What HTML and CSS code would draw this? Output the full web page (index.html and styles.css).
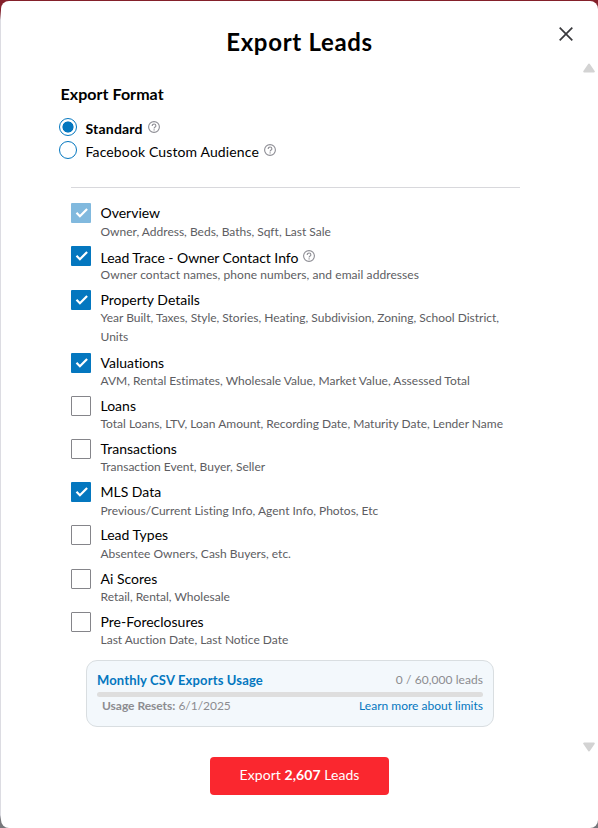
FILE: index.html
```html
<!DOCTYPE html>
<html lang="en">
<head>
<meta charset="utf-8">
<title>Export Leads</title>
<link rel="stylesheet" href="styles.css">
</head>
<body>
<svg class="defs" aria-hidden="true">
  <symbol id="help" viewBox="0 0 12 12"><circle cx="6" cy="6" r="5.400"/><path d="M4.200 4.900c0-2.500 3.700-2.400 3.700 0C7.900 6.100 6.100 6 6.100 7.500M6.100 8.300v1.100"/></symbol>
  <symbol id="check" viewBox="0 0 20 20"><path d="M5.500 9.800l3.400 3.400 7.200-7.200"/></symbol>
</svg>
<main class="modal">
  <header class="modal-head">
    <h1>Export Leads</h1>
    <button class="close" aria-label="Close"><svg viewBox="0 0 14 14"><path d="M.7.7l12.600 12.600M13.300.7L.7 13.300"/></svg></button>
  </header>
  <svg class="scroll-arrow up" viewBox="0 0 12 10"><path d="M6 1.500L10.800 8.500H1.200z"/></svg>
  <svg class="scroll-arrow down" viewBox="0 0 12 10"><path d="M6 8.500L1.200 1.500h9.600z"/></svg>

  <section class="format">
    <h2>Export Format</h2>
    <label class="radio selected"><span class="dot"></span><b>Standard</b><svg class="help"><use href="#help"/></svg></label>
    <label class="radio"><span class="dot"></span><span class="radio-text">Facebook Custom Audience</span><svg class="help"><use href="#help"/></svg></label>
  </section>

  <section class="fields">
    <div class="field"><span class="box on disabled"><svg><use href="#check"/></svg></span><div><h3>Overview</h3><p>Owner, Address, Beds, Baths, Sqft, Last Sale</p></div></div>
    <div class="field with-help"><span class="box on"><svg><use href="#check"/></svg></span><div><h3>Lead Trace - Owner Contact Info<svg class="help"><use href="#help"/></svg></h3><p>Owner contact names, phone numbers, and email addresses</p></div></div>
    <div class="field two-line"><span class="box on"><svg><use href="#check"/></svg></span><div><h3>Property Details</h3><p>Year Built, Taxes, Style, Stories, Heating, Subdivision, Zoning, School District,<br>Units</p></div></div>
    <div class="field"><span class="box on"><svg><use href="#check"/></svg></span><div><h3>Valuations</h3><p>AVM, Rental Estimates, Wholesale Value, Market Value, Assessed Total</p></div></div>
    <div class="field"><span class="box"></span><div><h3>Loans</h3><p>Total Loans, LTV, Loan Amount, Recording Date, Maturity Date, Lender Name</p></div></div>
    <div class="field"><span class="box"></span><div><h3>Transactions</h3><p>Transaction Event, Buyer, Seller</p></div></div>
    <div class="field"><span class="box on"><svg><use href="#check"/></svg></span><div><h3>MLS Data</h3><p>Previous/Current Listing Info, Agent Info, Photos, Etc</p></div></div>
    <div class="field"><span class="box"></span><div><h3>Lead Types</h3><p>Absentee Owners, Cash Buyers, etc.</p></div></div>
    <div class="field"><span class="box"></span><div><h3>Ai Scores</h3><p>Retail, Rental, Wholesale</p></div></div>
    <div class="field"><span class="box"></span><div><h3>Pre-Foreclosures</h3><p>Last Auction Date, Last Notice Date</p></div></div>
  </section>

  <section class="usage">
    <div class="usage-row"><strong class="usage-title">Monthly CSV Exports Usage</strong><span class="count">0 / 60,000 leads</span></div>
    <div class="track"></div>
    <div class="usage-row second"><span class="resets"><b>Usage Resets:</b> 6/1/2025</span><a class="limits">Learn more about limits</a></div>
  </section>

  <button class="export">Export <b>2,607</b> Leads</button>
</main>
</body>
</html>
```
FILE: styles.css
```css
* { box-sizing: border-box; }
body {
  margin: 0;
  height: 828px;
  overflow: hidden;
  background: linear-gradient(#84202a 0 10px, #dcdce2 20px 815px, #77777b 820px);
  font-family: Lato, "Liberation Sans", sans-serif;
  font-variant-ligatures: none;
  color: #000;
}
h1, h2, h3, p { margin: 0; }
button { font-family: inherit; border: 0; padding: 0; }
.defs { position: absolute; width: 0; height: 0; }
.modal {
  position: relative;
  display: flex;
  flex-direction: column;
  height: 827px;
  margin: 1px 0 0 1px;
  background: #fff;
  border-radius: 8px;
}
.modal-head { height: 81px; padding-top: 26px; text-align: center; }
h1 { font-size: 24px; line-height: 30px; font-weight: 700; letter-spacing: .68px; }
.close { position: absolute; left: 558px; top: 26px; width: 14px; height: 14px; background: none; }
.close svg { display: block; width: 14px; height: 14px; fill: none; stroke: #39393d; stroke-width: 1.7; }
.scroll-arrow { position: absolute; width: 12px; height: 10px; fill: #d3d3d3; stroke: #d3d3d3; stroke-width: 2; stroke-linejoin: round; }
.up { left: 582px; top: 62px; }
.down { left: 582px; top: 741px; }

.format { padding-left: 59.500px; height: 105px; }
h2 { font-size: 16px; line-height: 24px; font-weight: 700; height: 34px; letter-spacing: .05px; }
.radio { display: flex; height: 23px; font-size: 14px; line-height: 24px; letter-spacing: .13px; }
.dot { width: 18px; height: 18px; margin: 2px 8.500px 0 -1.500px; border: 1.5px solid #0477bf; border-radius: 50%; }
.selected .dot { background: radial-gradient(circle, #0477bf 5.2px, #fff 5.900px); }
.radio b, .radio-text { padding-top: 1px; }
.selected b { letter-spacing: .2px; }
.help { width: 12px; height: 12px; margin: 5px 0 0 5px; fill: none; stroke: #8e8e95; stroke-width: 1.1; flex: none; }

.fields { width: 449px; margin-left: 70px; padding-top: 15.200px; border-top: 1px solid #d8d8dc; height: 473px; }
.field { display: grid; grid-template-columns: 20px 1fr; column-gap: 9.500px; padding-bottom: 4.200px; }
.two-line { padding-bottom: 5px; }
.box { width: 20px; height: 20px; border: 1px solid #85858a; border-radius: 1px; }
.box svg { display: block; width: 20px; height: 20px; fill: none; stroke: #fff; stroke-width: 2.2; }
.on { background: #0477bf; border: 0; }
.disabled { background: #81b9de; }
h3 { display: flex; font-size: 14px; line-height: 20px; height: 20px; font-weight: 400; }
.with-help h3 { padding-top: 2px; letter-spacing: -.04px; }
.with-help .help { margin: 2px 0 0 4.500px; }
p { font-size: 12px; line-height: 19px; color: #5d5d62; white-space: nowrap; margin-top: -1.600px; padding-bottom: 1.600px; }
.with-help p { letter-spacing: .07px; }

.usage { width: 408px; height: 67px; margin-left: 85px; padding: 9px 10px; border: 1px solid #d9dee1; border-radius: 11px; background: #f3f8fc; font-size: 12px; color: #8c8c90; }
.usage-row { display: flex; justify-content: space-between; line-height: 19px; }
.usage-title { font-size: 13px; color: #0477bf; letter-spacing: .15px; line-height: 20px; }
.count { letter-spacing: .06px; }
.resets { letter-spacing: -.03px; }
.track { height: 5px; margin-top: 2px; border-radius: 3px; background: #dedede; }
.second { padding-left: 5px; margin-top: -1px; }
.limits { color: #0477bf; }

.export { width: 179px; height: 38px; margin: 30px 0 0 209px; padding-bottom: 3px; border-radius: 4px; background: #fa272f; color: #fff; font-size: 14px; letter-spacing: .06px; }
```
